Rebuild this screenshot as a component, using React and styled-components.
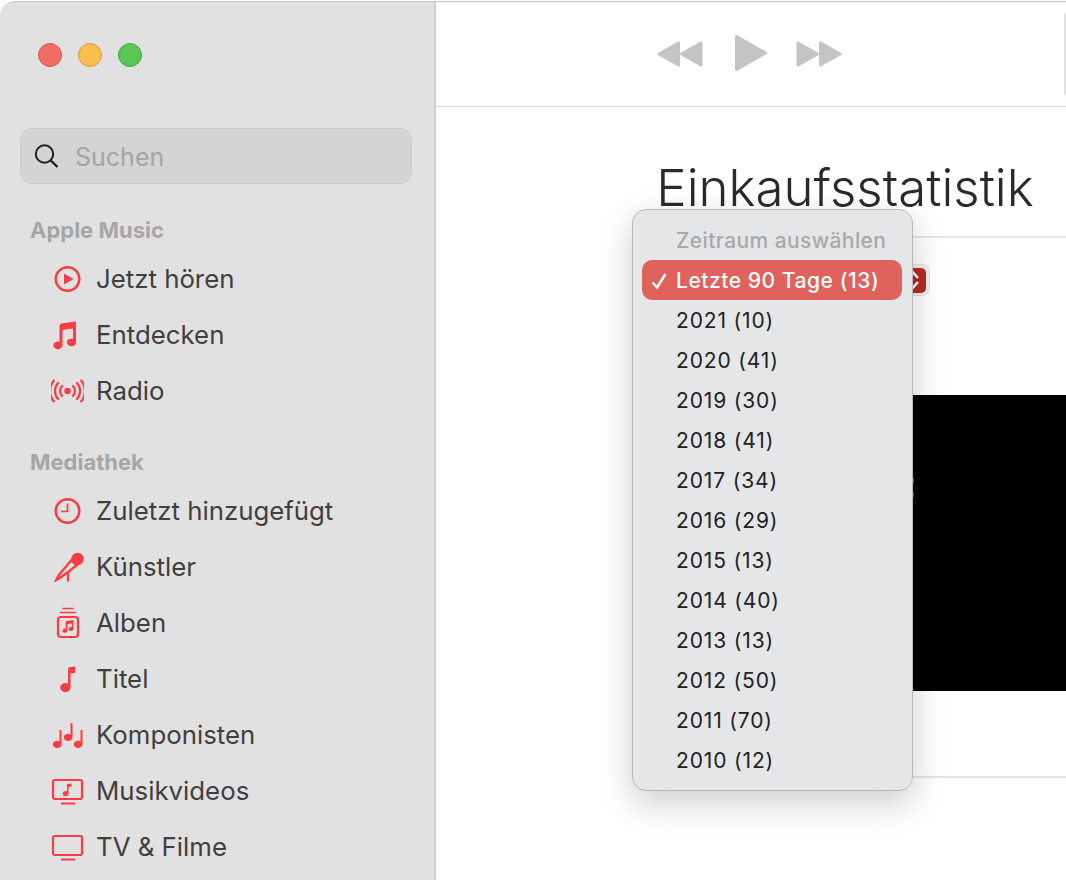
import styled, { createGlobalStyle } from "styled-components"

const GlobalStyle = createGlobalStyle`
html, body {
  margin: 0;
  padding: 0;
  height: 880px;
  overflow: hidden;
  background: #ffffff;
  font-family: Inter, "Liberation Sans", sans-serif;
}
`

const red = "#fc3c44"

const Note = ({ x = 0, y = 0, s = 1 }) => (
    <path
        transform={`translate(${x} ${y}) scale(${s})`}
        d="M5 1.5 L14 0 V10.5 A2.8 2.4 0 1 1 12.2 8.3 V4 L6.8 5 V12.5 A2.8 2.4 0 1 1 5 10.3 Z"
        fill={red}
    />
)

const icons = {
    play: (
        <>
            <circle cx="16.5" cy="16" r="11.8" fill="none" stroke={red} strokeWidth="2.4" />
            <path d="M13 10.5 L22.5 16 L13 21.5 Z" fill={red} />
        </>
    ),
    music: (
        <path
            d="M8.5 7 Q8.5 5 10.5 4.6 L23.5 2.6 Q25 2.4 25 4 V23 A4.6 3.8 0 1 1 22 19.8 V9.4 L11.5 11 V26 A4.6 3.8 0 1 1 8.5 22.8 Z"
            fill={red}
        />
    ),
    radio: (
        <g fill="none" stroke={red} strokeWidth="2.2" strokeLinecap="round">
            <circle cx="16.5" cy="16" r="3.2" fill={red} stroke="none" />
            <path d="M11 11 A7.5 7.5 0 0 0 11 21" />
            <path d="M22 11 A7.5 7.5 0 0 1 22 21" />
            <path d="M7 8 A12 12 0 0 0 7 24" />
            <path d="M26 8 A12 12 0 0 1 26 24" />
            <path d="M2.8 5.5 A17 17 0 0 0 2.8 26.5" />
            <path d="M30.2 5.5 A17 17 0 0 1 30.2 26.5" />
        </g>
    ),
    clock: (
        <>
            <circle cx="16.5" cy="16" r="11.8" fill="none" stroke={red} strokeWidth="2.4" />
            <path d="M16.5 8.5 V16.5 H10" fill="none" stroke={red} strokeWidth="1.7" />
        </>
    ),
    mic: (
        <>
            <circle cx="26.5" cy="8" r="6.2" fill={red} />
            <path d="M20.5 9 L25.5 14.5 L9.5 26.5 L5.5 28.5 L7.5 24.5 Z" fill="none" stroke={red} strokeWidth="2.4" strokeLinejoin="round" />
            <path d="M3.5 30.5 L7 28" stroke={red} strokeWidth="1.8" />
            <path d="M17 21 V30.5" stroke={red} strokeWidth="2.2" />
        </>
    ),
    album: (
        <>
            <path d="M11.5 1.5 H22.5 M9 5.5 H25" stroke={red} strokeWidth="1.6" />
            <rect x="7" y="10" width="20" height="20" rx="3" fill="none" stroke={red} strokeWidth="2.2" />
            <Note x="10.5" y="13" s="0.85" />
        </>
    ),
    note: (
        <path d="M17 6 Q17 4.5 18.5 4.2 L24 3.4 V10 L19.5 10.6 V24.5 A5.2 4.6 0 1 1 17 20.6 Z" fill={red} />
    ),
    composers: (
        <g fill={red}>
            <path d="M8.5 11 H10.5 V25.5 A4.4 3.6 0 1 1 8.5 22.4 Z" />
            <path d="M19.5 4 H21.5 V18.5 A4.4 3.6 0 1 1 19.5 15.4 Z" />
            <path d="M29.5 11 H31.5 V25.5 A4.4 3.6 0 1 1 29.5 22.4 Z" />
        </g>
    ),
    video: (
        <>
            <rect x="2" y="5" width="29" height="19" rx="2" fill="none" stroke={red} strokeWidth="2.2" />
            <path d="M10 28.5 H24" stroke={red} strokeWidth="2" />
            <path d="M16 9 L20.5 8.4 V11.5 L17.6 12 V18.5 A3 2.5 0 1 1 16 16.4 Z" fill={red} />
        </>
    ),
    tv: (
        <>
            <rect x="2" y="5" width="29" height="19" rx="2" fill="none" stroke={red} strokeWidth="2.2" />
            <path d="M10 28.5 H24" stroke={red} strokeWidth="2" />
        </>
    ),
}

const appleMusic = [
    ["play", "Jetzt hören"],
    ["music", "Entdecken"],
    ["radio", "Radio"],
]

const library = [
    ["clock", "Zuletzt hinzugefügt"],
    ["mic", "Künstler"],
    ["album", "Alben"],
    ["note", "Titel"],
    ["composers", "Komponisten"],
    ["video", "Musikvideos"],
    ["tv", "TV & Filme"],
]

const periods = [
    "2021 (10)",
    "2020 (41)",
    "2019 (30)",
    "2018 (41)",
    "2017 (34)",
    "2016 (29)",
    "2015 (13)",
    "2014 (40)",
    "2013 (13)",
    "2012 (50)",
    "2011 (70)",
    "2010 (12)",
]

const SideItem = ({ icon, label }) => (
    <Item>
        <ItemIcon viewBox="0 0 33 32">{icons[icon]}</ItemIcon>
        <ItemLabel>{label}</ItemLabel>
    </Item>
)

const App = () => {
    return (
        <Window>
            <GlobalStyle />
            <Sidebar>
                <Lights>
                    <Light $bg="#f26d63" $edge="#d9544b" />
                    <Light $bg="#f8bf4f" $edge="#dc9c35" />
                    <Light $bg="#5bc655" $edge="#45a83f" />
                </Lights>
                <Search>
                    <svg width="26" height="26" viewBox="0 0 26 26" fill="none" stroke="#1c1c1c">
                        <circle cx="11.5" cy="11" r="8.7" strokeWidth="2" />
                        <path d="M17.8 17.5 L24.5 24" strokeWidth="2.4" />
                    </svg>
                    <SearchText>Suchen</SearchText>
                </Search>
                <SectionLabel>Apple Music</SectionLabel>
                {appleMusic.map(([icon, label]) => (
                    <SideItem key={label} icon={icon} label={label} />
                ))}
                <SectionLabel $second>Mediathek</SectionLabel>
                {library.map(([icon, label]) => (
                    <SideItem key={label} icon={icon} label={label} />
                ))}
            </Sidebar>
            <Main>
                <Toolbar>
                    <Transport>
                        <svg width="46" height="28" viewBox="0 0 46 28" fill="#c4c4c4" stroke="#c4c4c4" strokeWidth="3" strokeLinejoin="round">
                            <path d="M21.5 3 V25 L2 14 Z" />
                            <path d="M44 3 V25 L24.5 14 Z" />
                        </svg>
                        <PlayIcon width="32" height="36" viewBox="0 0 32 36" fill="#c4c4c4" stroke="#c4c4c4" strokeWidth="3" strokeLinejoin="round">
                            <path d="M1.5 1.5 V34.5 L30.5 18 Z" />
                        </PlayIcon>
                        <svg width="46" height="28" viewBox="0 0 46 28" fill="#c4c4c4" stroke="#c4c4c4" strokeWidth="3" strokeLinejoin="round">
                            <path d="M2 3 V25 L21.5 14 Z" />
                            <path d="M24.5 3 V25 L44 14 Z" />
                        </svg>
                    </Transport>
                    <Display />
                </Toolbar>
                <Content>
                    <Title>Einkaufsstatistik</Title>
                    <Rule />
                    <Picker>
                        <Stepper>
                            <svg width="18" height="24" viewBox="0 0 18 24" fill="none" stroke="#fff" strokeWidth="2.6">
                                <path d="M4 10 L9 4.5 L14 10" />
                                <path d="M4 14 L9 19.5 L14 14" />
                            </svg>
                        </Stepper>
                    </Picker>
                    <Report>
                        <ReportMark />
                    </Report>
                    <Rule />
                </Content>
            </Main>
            <Menu>
                <MenuHeading>Zeitraum auswählen</MenuHeading>
                <MenuItem $selected>
                    <Check width="17" height="16" viewBox="0 0 17 16" fill="none" stroke="#fff" strokeWidth="2.6">
                        <path d="M1.5 9.5 L6 14.5 L14.5 1" />
                    </Check>
                    Letzte 90 Tage (13)
                </MenuItem>
                {periods.map((period) => (
                    <MenuItem key={period}>{period}</MenuItem>
                ))}
            </Menu>
        </Window>
    )
}

const Window = styled.div`
position: relative;
box-sizing: border-box;
display: flex;
height: 880px;
padding-top: 1px;
overflow: hidden;
background: #ffffff;
`

const Sidebar = styled.aside`
flex: none;
box-sizing: border-box;
width: 436px;
height: 879px;
background: #e1e1e1;
border-top: 1px solid #c4c4c4;
border-right: 2px solid #cfcfcf;
border-top-left-radius: 16px;
`

const Lights = styled.div`
display: flex;
gap: 16px;
padding: 41px 0 0 38px;
height: 24px;
`

const Light = styled.span`
box-sizing: border-box;
width: 24px;
height: 24px;
border-radius: 50%;
background: ${(props) => props.$bg};
border: 1px solid ${(props) => props.$edge};
`

const Search = styled.div`
box-sizing: border-box;
display: flex;
align-items: center;
gap: 16px;
width: 392px;
height: 56px;
margin: 61px 0 0 20px;
padding: 0 0 0 12px;
border-radius: 12px;
background: #d4d4d4;
border: 1px solid #cacaca;
color: #a4a4a4;
font-size: 25px;
`

const SearchText = styled.span`
padding-top: 2px;
`

const SectionLabel = styled.div`
margin: ${(props) => (props.$second ? "29px" : "32px")} 0 7px 30px;
height: 28px;
line-height: 28px;
font-size: 22px;
font-weight: 700;
color: #a6a6a6;
`

const Item = styled.div`
display: flex;
align-items: center;
gap: 12px;
height: 56px;
padding-left: 51px;
font-size: 25.8px;
color: #3f3f3f;
`

const ItemIcon = styled.svg`
width: 33px;
height: 32px;
flex: none;
`

const ItemLabel = styled.span`
margin-top: -2px;
`

const Main = styled.main`
flex: none;
width: 820px;
`

const Toolbar = styled.header`
box-sizing: border-box;
display: flex;
align-items: center;
height: 106px;
padding: 0 0 0 221px;
border-top: 1px solid #c4c4c4;
border-bottom: 1px solid #dcdcdc;
`

const Transport = styled.div`
display: flex;
align-items: center;
`

const PlayIcon = styled.svg`
margin: -2px 29px 0 32px;
`

const Display = styled.div`
width: 100px;
height: 84px;
margin: -1px 0 0 222px;
border: 2px solid #e2e2e2;
border-radius: 6px;
`

const Content = styled.section`
width: 600px;
margin-left: 204px;
`

const Title = styled.h1`
width: 410px;
height: 81px;
margin: 0;
padding-top: 48px;
line-height: 66px;
text-align: center;
font-size: 51px;
font-weight: 300;
white-space: nowrap;
color: #2a2a2a;
`

const Rule = styled.div`
height: 2px;
background: #e5e5e5;
`

const Picker = styled.div`
box-sizing: border-box;
display: flex;
align-items: center;
justify-content: flex-end;
width: 170px;
height: 32px;
margin: 26px 0 0 120px;
padding-right: 3px;
border-radius: 7px;
background: #f1f1f1;
border: 1px solid #e4e4e4;
`

const Stepper = styled.span`
display: flex;
align-items: center;
justify-content: center;
width: 26px;
height: 25px;
border-radius: 5px;
background: #b92b22;
`

const Report = styled.div`
position: relative;
height: 296px;
margin: 99px 0 85px;
background: #000000;
`

const ReportMark = styled.span`
position: absolute;
left: 273px;
top: 83px;
width: 1px;
height: 5px;
background: #5a5a5a;
box-shadow: 0 14px 0 #5a5a5a;
`

const Menu = styled.div`
position: absolute;
left: 632px;
top: 209px;
box-sizing: border-box;
width: 281px;
height: 582px;
padding: 10px 10px 0 9px;
border-radius: 14px;
background: #e5e6e8;
border: 1px solid #b9b9ba;
box-shadow: 0 12px 34px rgba(0, 0, 0, 0.2);
`

const MenuHeading = styled.div`
height: 40px;
line-height: 42px;
padding-left: 34px;
font-size: 21px;
font-weight: 500;
letter-spacing: 0.4px;
color: #a8a8a9;
`

const MenuItem = styled.div`
position: relative;
height: 40px;
line-height: 42px;
padding-left: 34px;
border-radius: 10px;
font-size: 21px;
font-weight: ${(props) => (props.$selected ? 500 : 400)};
letter-spacing: ${(props) => (props.$selected ? "0.55px" : "0.85px")};
color: ${(props) => (props.$selected ? "#ffffff" : "#222222")};
background: ${(props) => (props.$selected ? "#e0625c" : "transparent")};
`

const Check = styled.svg`
position: absolute;
left: 9px;
top: 13px;
`

export default App
